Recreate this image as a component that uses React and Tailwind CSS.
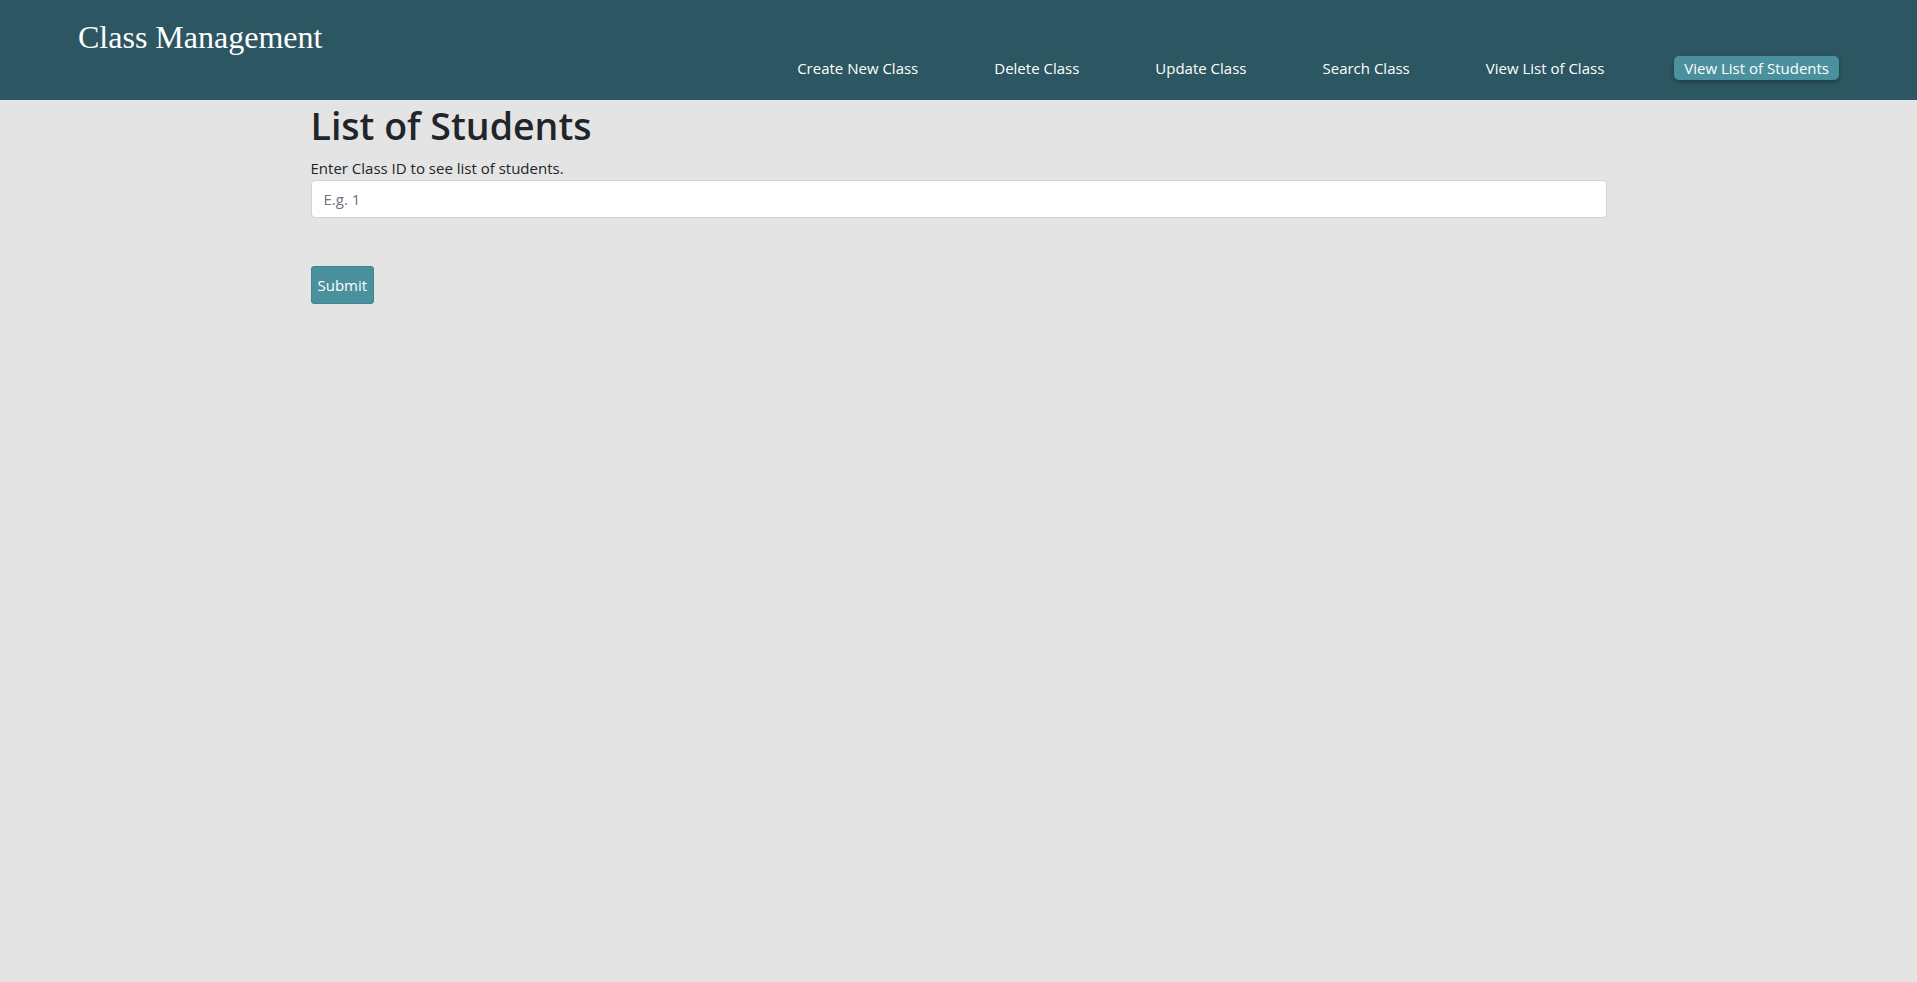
const links = ['Create New Class', 'Delete Class', 'Update Class', 'Search Class', 'View List of Class'];

export default function App() {
  return (
    <div className="min-h-screen bg-[#e4e4e4] text-[#212529] font-['Open_Sans',sans-serif]">
      <header className="h-[100px] bg-[#2c5661] flex justify-between px-[78px]">
        <h2 className="pt-[18px] font-['Liberation_Serif',serif] text-[32px] leading-[38px] text-white">
          Class Management
        </h2>
        <nav className="flex items-start gap-[56px] pt-[56px] text-[15px] text-white">
          {links.map(l => (
            <a key={l} href="#" className="px-[10px] leading-[24px] h-[24px]">
              {l}
            </a>
          ))}
          <a href="#" className="ml-[4px] px-[10px] leading-[24px] h-[24px] rounded-[5px] bg-[#4a909d] shadow-[0_2px_4px_rgba(0,0,0,0.3)]">
            View List of Students
          </a>
        </nav>
      </header>

      <main className="mx-auto max-w-[1320px] px-[12px]">
        <h1 className="pt-[2px] mb-[6px] text-[37.5px] leading-[48px] font-semibold">List of Students</h1>
        <label className="block text-[15px] leading-[24px]">Enter Class ID to see list of students.</label>
        <input
          type="text"
          placeholder="E.g. 1"
          className="block w-full h-[38px] px-[12px] bg-white border border-[#ced4da] rounded-[4px] text-[15px] placeholder:text-[#6c757d] outline-none"
        />
        <button className="mt-[48px] h-[38px] px-[6px] bg-[#4a909d] text-white text-[15px] rounded-[3px] border border-[#3f8591]">
          Submit
        </button>
      </main>
    </div>
  );
}
